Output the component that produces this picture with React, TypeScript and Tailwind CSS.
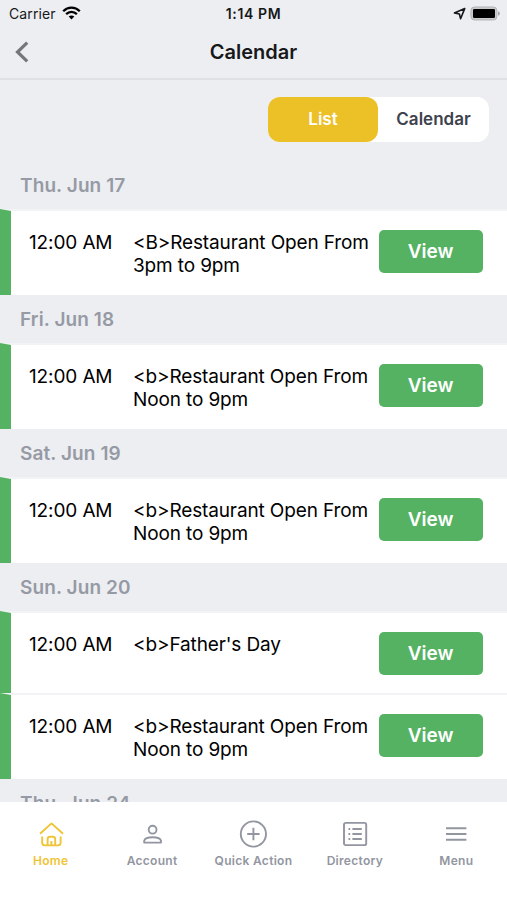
import React from "react";

type Event = { title: string[]; compact?: boolean };
type Day = { label: string; events: Event[] };

const noon = ["<b>Restaurant Open From", "Noon to 9pm"];

const days: Day[] = [
  { label: "Thu. Jun 17", events: [{ title: ["<B>Restaurant Open From", "3pm to 9pm"] }] },
  { label: "Fri. Jun 18", events: [{ title: noon }] },
  { label: "Sat. Jun 19", events: [{ title: noon }] },
  { label: "Sun. Jun 20", events: [{ title: ["<b>Father's Day"], compact: true }, { title: noon }] },
  { label: "Thu. Jun 24", events: [] },
];

function StatusBar() {
  return (
    <div className="grid h-7 grid-cols-3 items-center px-[9px] pb-[2px] text-[14px] text-[#17181a]">
      <div className="flex items-center gap-[6px]">
        <span className="tracking-[0.1px]">Carrier</span>
        <svg width="19" height="14" viewBox="0 0 19 14" fill="none" stroke="#000" strokeWidth="2.3">
          <path d="M1.2 5.2C6 .5 13 .5 17.8 5.2" />
          <path d="M4.1 8.2C7.3 5.2 11.7 5.2 14.9 8.2" />
          <path d="M6.7 10.6C8.3 9.1 10.7 9.1 12.3 10.6L9.5 13.4Z" fill="#000" stroke="none" />
        </svg>
      </div>
      <span className="text-center font-semibold tracking-[0.6px] whitespace-nowrap">1:14 PM</span>
      <div className="-mr-[2px] flex items-center justify-end gap-[4px]">
        <svg width="13" height="13" viewBox="0 0 13 13" fill="none" stroke="#17181a" strokeWidth="1.6" strokeLinejoin="round">
          <path d="M11.7 1.6L1.4 5.9L6.4 7L7.6 11.7Z" />
        </svg>
        <svg width="30" height="15" viewBox="0 0 30 15">
          <rect x="0.9" y="1" width="26" height="13" rx="3.6" fill="#c9cacc" stroke="#b2b3b5" />
          <rect x="3" y="3" width="22" height="9" rx="1.2" fill="#000" />
          <path d="M28 5.2Q29.9 5.8 29.9 7.4T28 9.7Z" fill="#a7a8aa" />
        </svg>
      </div>
    </div>
  );
}

function EventRow({ event }: { event: Event }) {
  return (
    <div
      className={`flex border-t-2 border-l-[11px] border-t-[#f2f3f5] border-l-[#55b263] bg-white pt-[19px] pr-[24.5px] pl-[18px] ${
        event.compact ? "h-[82px]" : "h-[86px]"
      }`}
    >
      <div className="w-[104px] shrink-0 pt-[1px] text-[19px] leading-[23px] tracking-[-0.12px] whitespace-nowrap text-black">12:00 AM</div>
      <div className="min-w-0 flex-1 pt-[1px] text-[19px] leading-[23px] tracking-[-0.13px] whitespace-nowrap text-black">
        {event.title.map((line) => (
          <div key={line}>{line}</div>
        ))}
      </div>
      <button className="h-[43px] w-[104px] shrink-0 rounded-[5px] bg-[#55b263] pt-[1px] text-[19px] font-semibold text-white">View</button>
    </div>
  );
}

const icons = {
  home: (
    <path d="M2 12.8L13.5 2.4L25 12.8M4.2 15.6V21.8Q4.2 24.4 6.8 24.4H20Q22.6 24.4 22.6 21.8V15.6M9.6 24.2V18.2Q9.6 15.8 12 15.8H14.8Q17.2 15.8 17.2 18.2V24.2M13.4 20V24" />
  ),
  account: (
    <>
      <circle cx="13.6" cy="8.7" r="3.9" />
      <path d="M5.2 21.6V19.7Q6.2 16.3 13.6 16.3T22 19.7V21.6Z" />
    </>
  ),
  plus: (
    <>
      <circle cx="13.4" cy="13" r="12.6" />
      <path d="M13.4 6.8V19.2M7.2 13H19.6" />
    </>
  ),
  directory: (
    <>
      <rect x="2" y="1.9" width="22.2" height="22.2" rx="1.7" />
      <path d="M10.4 8H19.8M10.4 13H19.8M10.4 18H19.8M6.5 8H8.2M6.5 13H8.2M6.5 18H8.2" />
    </>
  ),
  menu: <path d="M3 7.3H23.4M3 13H23.4M3 18.7H23.4" strokeWidth="2" />,
};

const tabs: { label: string; icon: keyof typeof icons }[] = [
  { label: "Home", icon: "home" },
  { label: "Account", icon: "account" },
  { label: "Quick Action", icon: "plus" },
  { label: "Directory", icon: "directory" },
  { label: "Menu", icon: "menu" },
];

export default function App() {
  return (
    <div className="flex h-[900px] w-[507px] flex-col overflow-hidden bg-[#edeef2] font-['Inter','Liberation_Sans',sans-serif] text-[#17181a]">
      <StatusBar />
      <header className="grid h-[52px] shrink-0 grid-cols-[60px_1fr_60px] items-center border-b-2 border-[#dfe0e4] pb-[3px]">
        <svg className="ml-[15px]" width="14" height="22" viewBox="0 0 14 22" fill="none" stroke="#75767a" strokeWidth="3.2">
          <path d="M12.2 1.6L2.5 11L12.2 20.4" />
        </svg>
        <h1 className="text-center text-[20px] font-semibold">Calendar</h1>
      </header>
      <main className="min-h-0 flex-1 overflow-hidden">
        <div className="flex h-[80px] justify-end pt-[17px] pr-[18px]">
          <div className="flex h-[45px] w-[221px] rounded-[12px] bg-white text-[17px] font-semibold">
            <button className="w-[110px] rounded-[12px] bg-[#ecc027] pt-[1px] text-white">List</button>
            <button className="flex-1 pt-[1px] text-[#3e424e]">Calendar</button>
          </div>
        </div>
        {days.map((day, i) => (
          <section key={day.label}>
            <h2
              className={`pl-[20px] text-[19px] leading-[48px] font-semibold tracking-[0.1px] text-[#969aa4] ${
                i === 0 ? "h-[49px] pt-[2px]" : "h-[48px] pt-[1px]"
              }`}
            >
              {day.label}
            </h2>
            {day.events.map((event) => (
              <EventRow key={event.title.join()} event={event} />
            ))}
          </section>
        ))}
      </main>
      <nav className="grid h-[98px] shrink-0 grid-cols-5 bg-white pt-[19px]">
        {tabs.map((tab) => (
          <button
            key={tab.label}
            className={`flex flex-col items-center gap-[6px] whitespace-nowrap ${tab.icon === "home" ? "text-[#efc435]" : "text-[#9296a1]"}`}
          >
            <svg width="26" height="26" viewBox="0 0 26 26" fill="none" stroke="currentColor" strokeWidth="1.9" strokeLinejoin="round" className="overflow-visible">
              {icons[tab.icon]}
            </svg>
            <span className="text-[12px] leading-[16px] font-semibold tracking-[0.3px]">{tab.label}</span>
          </button>
        ))}
      </nav>
    </div>
  );
}
